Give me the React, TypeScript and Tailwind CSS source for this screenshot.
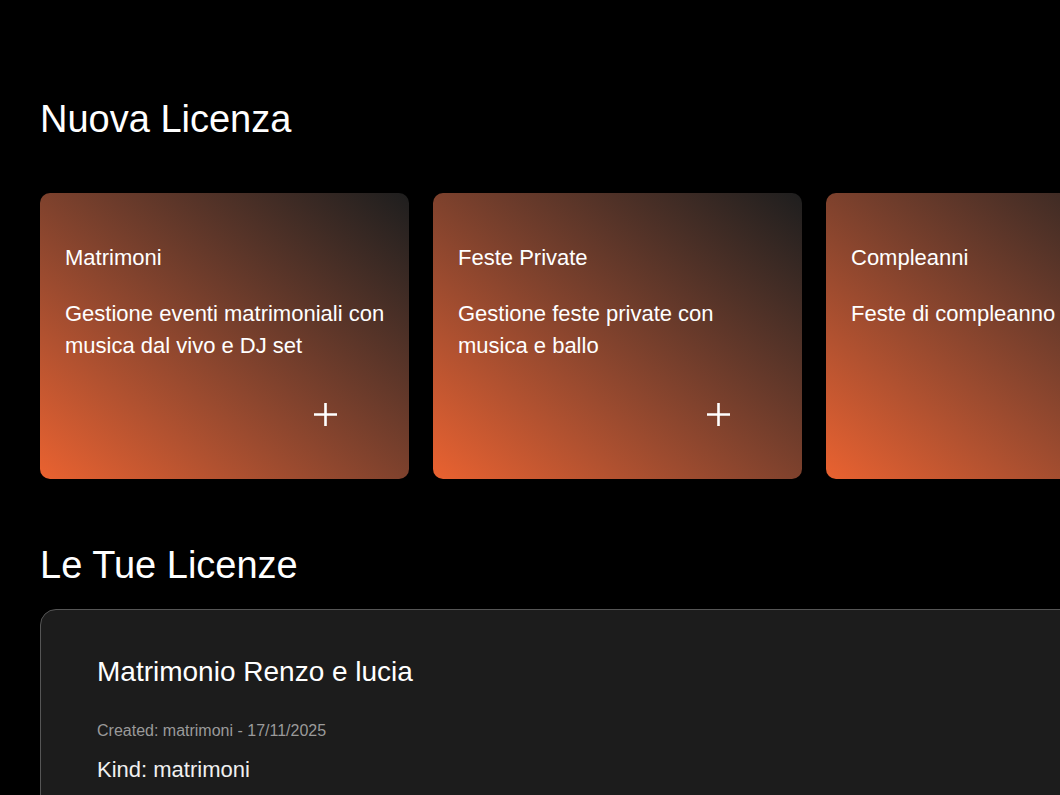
import React from "react";

type Category = {
  title: string;
  description: string;
};

const categories: Category[] = [
  {
    title: "Matrimoni",
    description: "Gestione eventi matrimoniali con musica dal vivo e DJ set",
  },
  {
    title: "Feste Private",
    description: "Gestione feste private con musica e ballo",
  },
  {
    title: "Compleanni",
    description: "Feste di compleanno per tutti",
  },
];

function PlusIcon() {
  return (
    <svg width="25" height="25" viewBox="0 0 25 25" fill="none">
      <path d="M12.5 1v23M1 12.5h23" stroke="white" strokeWidth="2.6" />
    </svg>
  );
}

function CategoryCard({ cat }: { cat: Category }) {
  return (
    <div className="flex h-[286px] w-[369px] shrink-0 flex-col rounded-[10px] bg-gradient-to-tr from-[#ea6230] to-[#1e1e1e] pl-[25px] pr-[22px] pt-[49px] text-white">
      <h3 className="text-[22px] leading-[32px]">{cat.title}</h3>
      <p className="mt-[24px] text-[22px] leading-[32px]">{cat.description}</p>
      <div className="mt-auto flex justify-end pr-[49px] pb-[52px]">
        <PlusIcon />
      </div>
    </div>
  );
}

export default function App() {
  return (
    <main
      className="h-screen w-full overflow-hidden bg-black text-white"
      style={{ fontFamily: '"Liberation Sans", Arial, sans-serif' }}
    >
      <div className="px-10 pt-[98px]">
        <h1 className="text-[38px] leading-[42px]">Nuova Licenza</h1>

        <div className="mt-[53px] flex gap-6">
          {categories.map((c) => (
            <CategoryCard key={c.title} cat={c} />
          ))}
        </div>

        <h2 className="mt-[65px] text-[38px] leading-[42px]">Le Tue Licenze</h2>

        <div className="mt-[23px] w-[1150px] rounded-2xl border border-[#555] bg-[#1c1c1c] px-14 pt-[45px] pb-10">
          <h3 className="text-[28px] leading-[34px]">Matrimonio Renzo e lucia</h3>
          <p className="mt-[30px] text-[16px] leading-[24px] text-[#9a9a9a]">
            Created: matrimoni - 17/11/2025
          </p>
          <p className="mt-[11px] text-[22px] leading-[32px] text-[#f0f0f0]">
            Kind: matrimoni
          </p>
        </div>
      </div>
    </main>
  );
}
